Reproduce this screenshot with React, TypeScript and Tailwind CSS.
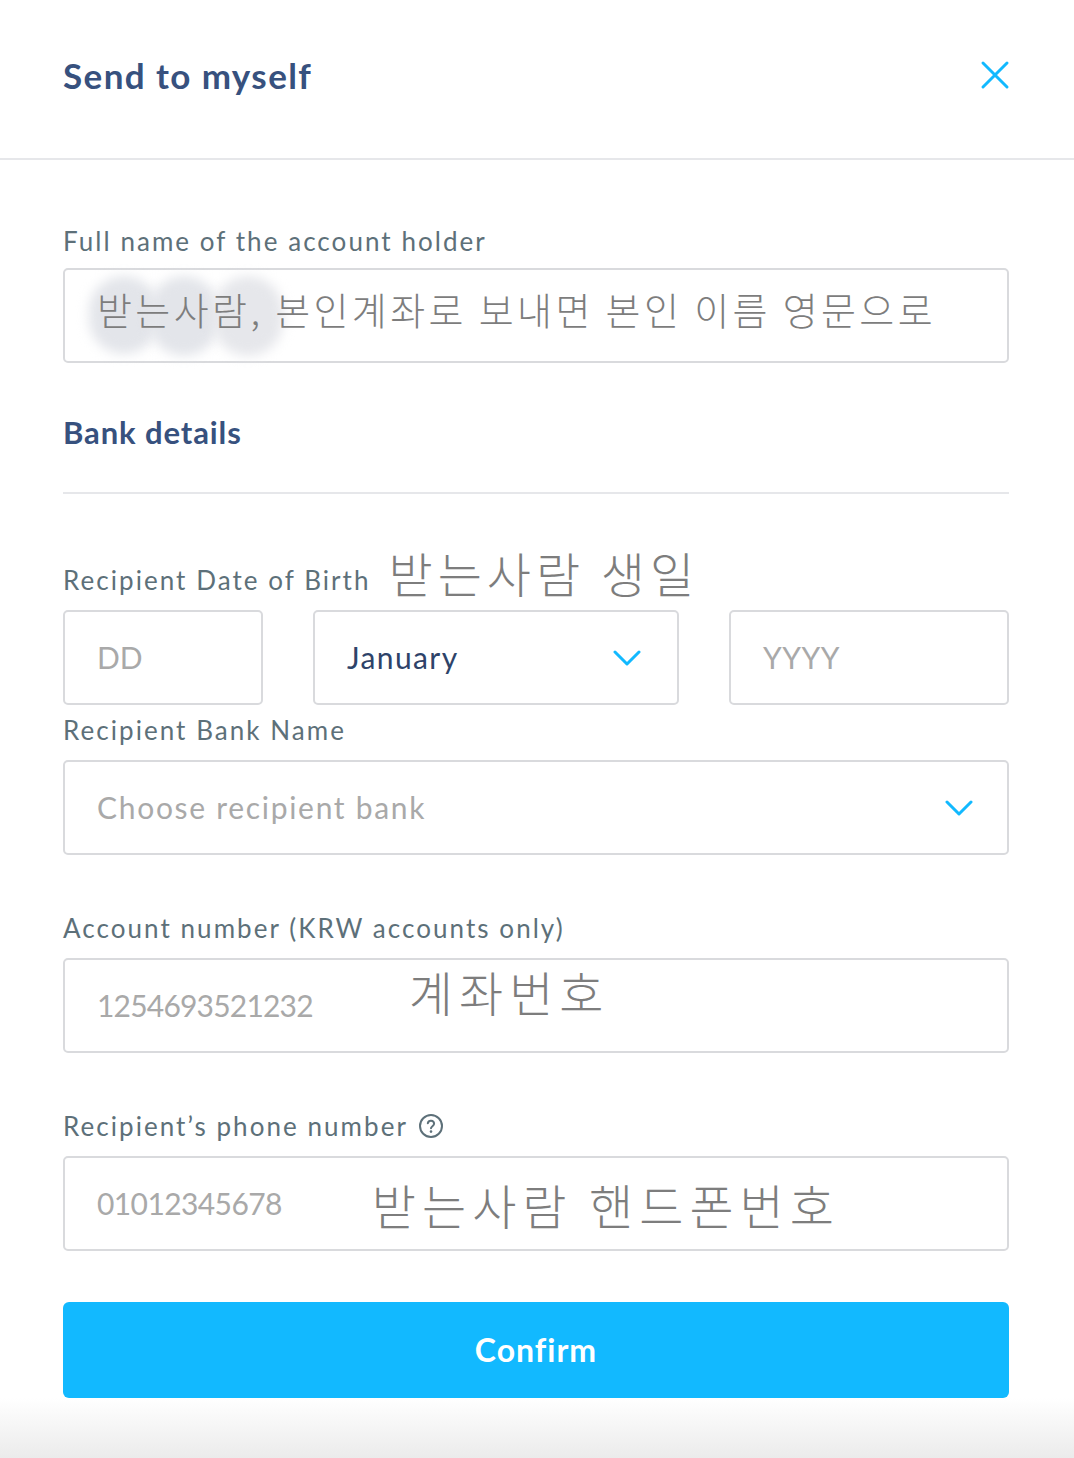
import React from "react";

const sans = "font-['Lato','Noto_Sans_CJK_KR',sans-serif]";
const hand = "font-['Noto_Sans_CJK_KR',sans-serif] font-light text-[#7d7d7d]";

const Chevron = () => (
  <svg width="28" height="16" viewBox="0 0 28 16" fill="none">
    <path d="M2 2l12 12L26 2" stroke="#12b9ff" strokeWidth="3" strokeLinecap="round" strokeLinejoin="round" />
  </svg>
);

const Label = ({ children }: { children: React.ReactNode }) => (
  <div className="text-[26px] leading-[30px] tracking-[2.05px] text-[#5d7079]">{children}</div>
);

const Box = ({ className = "", children }: { className?: string; children?: React.ReactNode }) => (
  <div
    className={`relative flex h-[95px] items-center rounded-[5px] border-2 border-[#d9dadd] bg-white px-[32px] ${className}`}
  >
    {children}
  </div>
);

export default function App() {
  return (
    <div className={`${sans} min-h-[1458px] w-full bg-white`}>
      <div className="flex h-[160px] items-center justify-between border-b-2 border-[#e6e7ea] pl-[63px] pr-[65px] pb-[8px]">
        <h1 className="text-[35px] font-bold tracking-[1.4px] text-[#37517e]">Send to myself</h1>
        <svg width="30" height="30" viewBox="0 0 30 30" className="mr-[-1px]">
          <path d="M3 3l24 24M27 3L3 27" stroke="#12b9ff" strokeWidth="3" strokeLinecap="round" />
        </svg>
      </div>

      <div className="pl-[63px] pr-[65px]">
        <div className="mt-[66px] mb-[12px]">
          <Label>Full name of the account holder</Label>
        </div>
        <Box>
          <div className="absolute left-[24px] top-[6px] flex">
            <div className="h-[78px] w-[70px] rounded-full bg-[#e3e5ea] blur-[6px]" />
            <div className="-ml-[10px] h-[80px] w-[70px] rounded-full bg-[#e3e5ea] blur-[6px]" />
            <div className="-ml-[6px] h-[80px] w-[70px] rounded-full bg-[#e6e7eb] blur-[6px]" />
          </div>
          <span className={`${hand} relative -mt-[14px] text-[38px] tracking-[3.4px]`}>
            받는사람, 본인계좌로 보내면 본인 이름 영문으로
          </span>
        </Box>

        <h2 className="mt-[49px] text-[31px] font-bold leading-[40px] tracking-[0.9px] text-[#37517e]">
          Bank details
        </h2>
        <div className="mt-[40px] h-[2px] bg-[#e6e7ea]" />

        <div className="mt-[48px] flex h-[60px] items-end">
          <div className="pb-[7px]">
            <Label>Recipient Date of Birth</Label>
          </div>
          <span className={`${hand} ml-[18px] text-[48px] leading-[60px] tracking-[5px]`}>받는사람 생일</span>
        </div>
        <div className="mt-[8px] flex gap-[50px]">
          <Box className="w-[200px]">
            <span className="text-[30px] text-[#a9a9a9]">DD</span>
          </Box>
          <Box className="w-[366px] justify-between pr-[36px]">
            <span className="text-[30px] tracking-[1.4px] text-[#2e4369]">January</span>
            <Chevron />
          </Box>
          <Box className="flex-1">
            <span className="text-[30px] tracking-[0.5px] text-[#a9a9a9]">YYYY</span>
          </Box>
        </div>

        <div className="mt-[10px] mb-[15px]">
          <Label>Recipient Bank Name</Label>
        </div>
        <Box className="justify-between pr-[34px]">
          <span className="text-[30px] tracking-[1.7px] text-[#a9a9a9]">Choose recipient bank</span>
          <Chevron />
        </Box>

        <div className="mt-[58px] mb-[15px]">
          <Label>Account number (KRW accounts only)</Label>
        </div>
        <Box>
          <span className="text-[30px] tracking-[-0.8px] text-[#a9a9a9]">1254693521232</span>
          <span className={`${hand} ml-[96px] -mt-[30px] text-[48px] tracking-[6px]`}>계좌번호</span>
        </Box>

        <div className="mt-[58px] mb-[15px] flex items-center">
          <Label>Recipient’s phone number</Label>
          <svg width="26" height="26" viewBox="0 0 26 26" className="ml-[10px]" fill="none">
            <circle cx="13" cy="13" r="11" stroke="#5d7079" strokeWidth="2" />
            <path
              d="M9.8 10.2a3.2 3.2 0 0 1 6.3.6c0 2.1-3.1 2.6-3.1 4.4"
              stroke="#5d7079"
              strokeWidth="2"
              strokeLinecap="round"
            />
            <circle cx="13" cy="18.6" r="1.3" fill="#5d7079" />
          </svg>
        </div>
        <Box>
          <span className="text-[30px] tracking-[-0.6px] text-[#a9a9a9]">01012345678</span>
          <span className={`${hand} ml-[90px] text-[48px] tracking-[6px]`}>받는사람 핸드폰번호</span>
        </Box>

        <button className="mt-[51px] flex h-[96px] w-full items-center justify-center rounded-[6px] bg-[#12b9ff] text-[32px] font-bold tracking-[1px] text-white">
          Confirm
        </button>
      </div>
      <div className="h-[61px] bg-gradient-to-b from-white to-[#ebebeb]" />
    </div>
  );
}
